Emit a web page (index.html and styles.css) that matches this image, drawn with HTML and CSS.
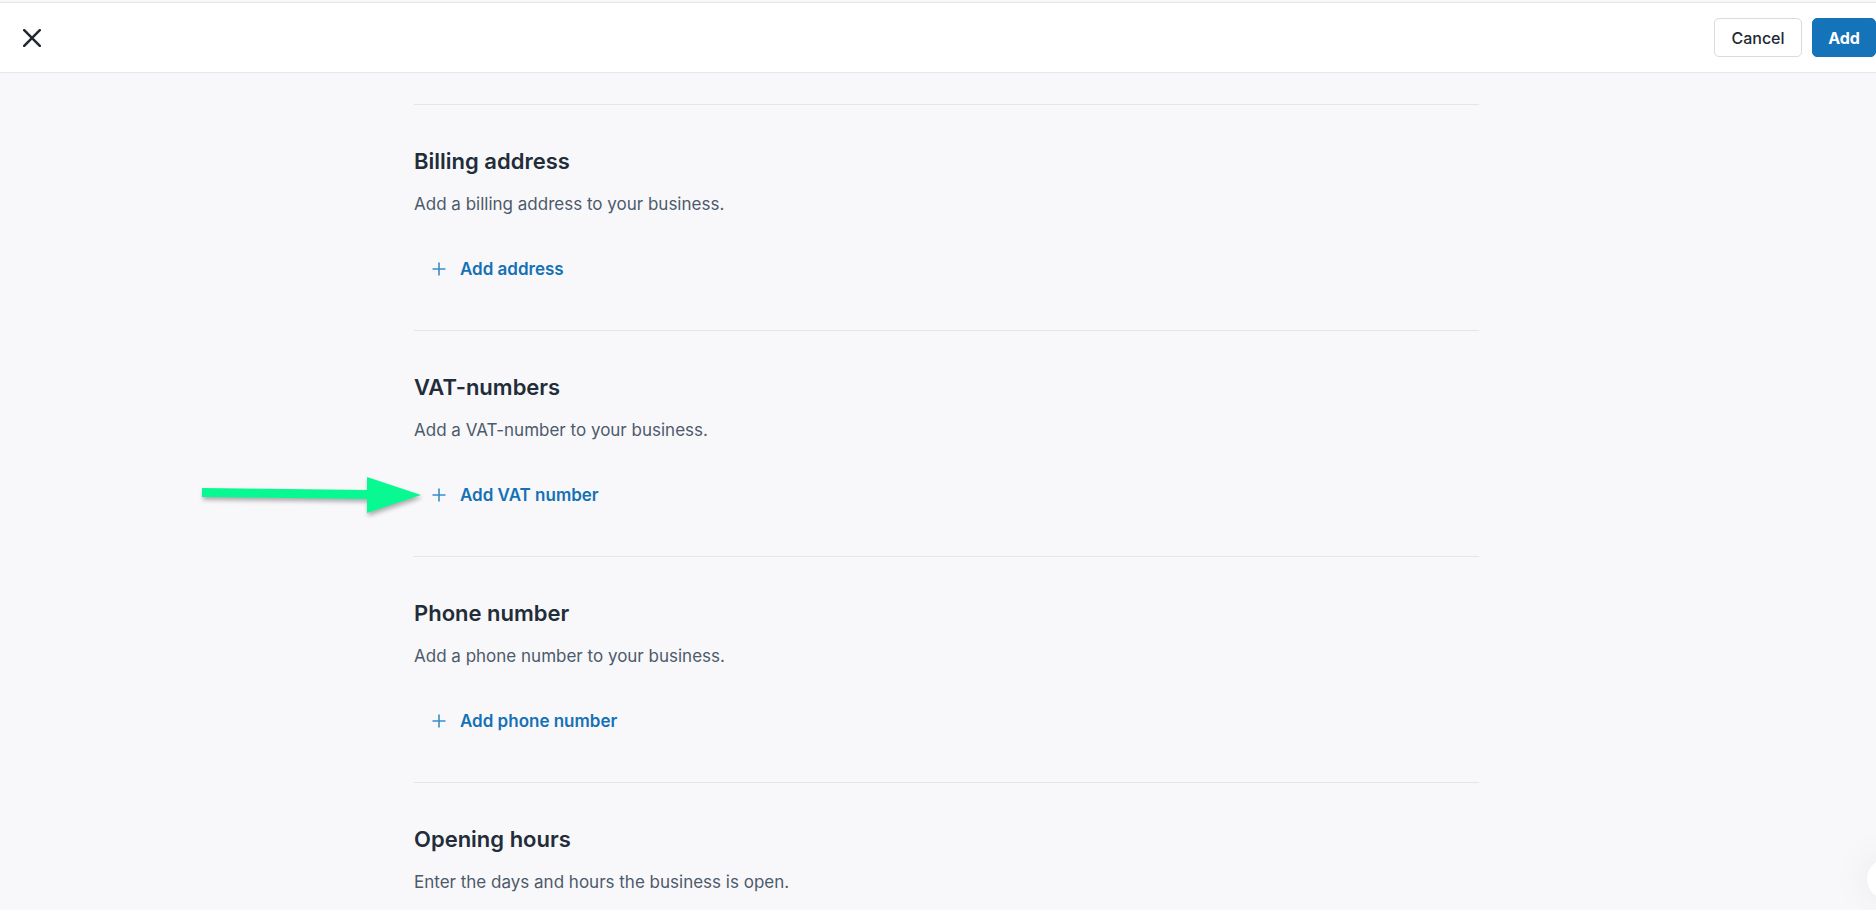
FILE: index.html
```html
<!DOCTYPE html>
<html lang="en">
<head>
<meta charset="utf-8">
<title>Add business</title>
<link rel="stylesheet" href="styles.css">
</head>
<body>
<header class="topbar">
  <button class="close-btn" aria-label="Close">
    <svg width="18" height="18" viewBox="0 0 18 18"><path d="M1.2 1.2L16.8 16.8M16.8 1.2L1.2 16.8" stroke="#1f2933" stroke-width="2.5" stroke-linecap="round"/></svg>
  </button>
  <div class="actions">
    <button class="btn btn-secondary">Cancel</button>
    <button class="btn btn-primary">Add</button>
  </div>
</header>
<main class="page">
  <div class="content">
    <section class="block">
      <h2 class="block-title">Billing address</h2>
      <p class="block-desc">Add a billing address to your business.</p>
      <button class="add-link"><svg class="plus" width="14" height="14" viewBox="0 0 14 14"><path d="M7 0.5V13.5M0.5 7H13.5" stroke="#3a8cc9" stroke-width="1.6"/></svg><span>Add address</span></button>
    </section>
    <section class="block">
      <h2 class="block-title">VAT-numbers</h2>
      <p class="block-desc">Add a VAT-number to your business.</p>
      <button class="add-link"><svg class="plus" width="14" height="14" viewBox="0 0 14 14"><path d="M7 0.5V13.5M0.5 7H13.5" stroke="#3a8cc9" stroke-width="1.6"/></svg><span>Add VAT number</span></button>
    </section>
    <section class="block">
      <h2 class="block-title">Phone number</h2>
      <p class="block-desc">Add a phone number to your business.</p>
      <button class="add-link"><svg class="plus" width="14" height="14" viewBox="0 0 14 14"><path d="M7 0.5V13.5M0.5 7H13.5" stroke="#3a8cc9" stroke-width="1.6"/></svg><span>Add phone number</span></button>
    </section>
    <section class="block">
      <h2 class="block-title">Opening hours</h2>
      <p class="block-desc">Enter the days and hours the business is open.</p>
    </section>
  </div>
</main>
<svg class="annot-arrow" width="240" height="60" viewBox="190 465 240 60">
  <polygon points="202,488 367,490 367,477 421,495 367,513 367,499 202,497" fill="#08f992"/>
</svg>
<div class="fab"></div>
</body>
</html>
```
FILE: styles.css
```css
html, body {
  margin: 0;
  padding: 0;
  height: 100%;
  overflow: hidden;
}
body {
  background: #f8f8fa;
  font-family: Inter, "Noto Sans", Arial, sans-serif;
  color: #222d39;
  padding-top: 2px;
  box-sizing: border-box;
}
.topbar {
  height: 69px;
  background: #fff;
  border-top: 1px solid #e4e5e8;
  border-bottom: 1px solid #e6e7ea;
  display: flex;
  align-items: center;
  justify-content: space-between;
  padding: 0 0 0 23px;
}
.close-btn {
  background: none;
  border: 0;
  padding: 0;
  width: 18px;
  height: 18px;
  display: flex;
  cursor: pointer;
}
.actions {
  display: flex;
  gap: 10px;
}
.btn {
  height: 39px;
  border-radius: 5px;
  font-family: inherit;
  font-size: 16px;
  padding: 0 15px;
  cursor: pointer;
}
.btn-secondary {
  width: 88px;
  background: #fff;
  border: 1px solid #d7dce2;
  color: #1f2933;
  font-weight: 500;
}
.btn-primary {
  width: 64px;
  background: #1473b9;
  border: 1px solid #1473b9;
  color: #fff;
  font-weight: 700;
}
.page {
  display: flex;
  justify-content: center;
  padding: 31px 0 0 17px;
}
.content {
  width: 1065px;
}
.block {
  border-top: 1px solid #e4e5e8;
  padding: 42px 0 41px;
}
.block-title {
  margin: 0;
  font-size: 22px;
  line-height: 28px;
  font-weight: 600;
  color: #222d39;
}
.block-desc {
  margin: 17px 0 0;
  font-size: 17px;
  line-height: 24px;
  color: #4d5a6c;
}
.add-link {
  margin-top: 33px;
  height: 40px;
  display: flex;
  align-items: center;
  gap: 14px;
  padding: 0 0 0 18px;
  background: none;
  border: 0;
  font-family: inherit;
  font-size: 17px;
  font-weight: 600;
  color: #1571b6;
  cursor: pointer;
}
.annot-arrow {
  position: absolute;
  left: 190px;
  top: 465px;
  filter: drop-shadow(1px 3px 2px rgba(0, 0, 0, 0.3));
}
.fab {
  position: absolute;
  left: 1867px;
  top: 859px;
  width: 40px;
  height: 40px;
  border-radius: 50%;
  background: #fff;
  box-shadow: 0 0 40px rgba(0, 0, 0, 0.08);
}
```
